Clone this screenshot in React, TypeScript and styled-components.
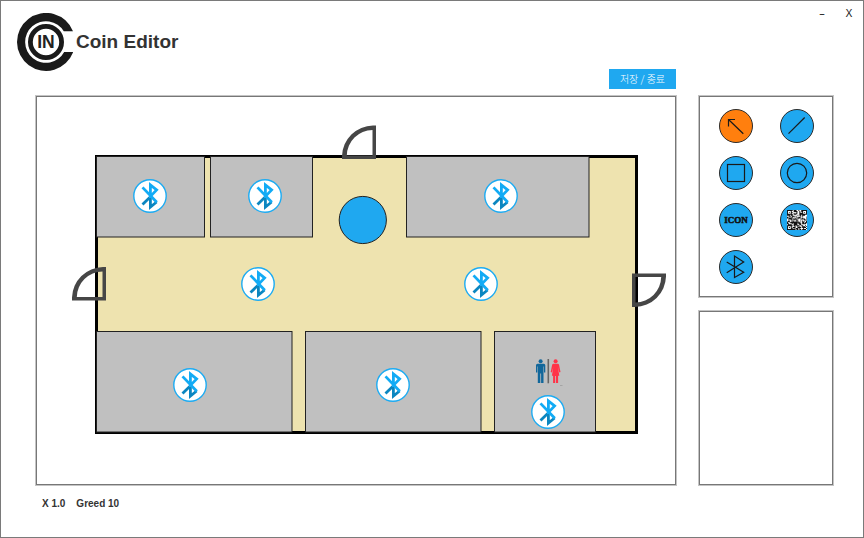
import React, { useState } from "react";
import styled, { createGlobalStyle } from "styled-components";

const BLUE = "#1fa8f0";
const DOOR = "#464646";

const GlobalStyle = createGlobalStyle`
  *, *::before, *::after { box-sizing: border-box; }
  body { margin: 0; background: #fff; }
  button { font: inherit; padding: 0; cursor: pointer; }
`;

const Shell = styled.div`
  display: flex;
  flex-direction: column;
  min-height: 100vh;
  border: 1px solid #7a7a7a;
  background: #fff;
  color: #333;
  font-family: "Liberation Sans", "Noto Sans CJK KR", sans-serif;
`;

const Header = styled.header`
  display: flex;
  padding-left: 16px;
  height: 88px;
`;

const Brand = styled.div`
  display: flex;
  align-items: center;
  align-self: flex-start;
  gap: 3px;
  margin-top: 12px;
`;

const Title = styled.h1`
  margin: 0;
  font-size: 19px;
  line-height: 24px;
  font-weight: 700;
`;

const SaveButton = styled.button`
  align-self: flex-end;
  margin-left: auto;
  width: 67px;
  height: 20px;
  border: 0;
  background: ${BLUE};
  color: #fff;
  && {
    font-family: "Noto Sans CJK KR", sans-serif;
    font-size: 10px;
    font-weight: 300;
    line-height: 20px;
  }
`;

const WindowControls = styled.div`
  display: flex;
  justify-content: flex-end;
  gap: 7px;
  width: 187px;
  padding: 2px 4px 0 0;
`;

const WindowButton = styled.button`
  width: 20px;
  height: 20px;
  border: 0;
  background: transparent;
  color: #222;
  && {
    font-family: "Noto Sans", sans-serif;
    font-size: 11px;
    line-height: 20px;
  }
`;

const Workspace = styled.main`
  display: grid;
  grid-template-columns: minmax(0, 1fr) 134px;
  gap: 23px;
  padding: 7px 30px 0 35px;
`;

const Panel = styled.section`
  border: 1px solid #777;
  box-shadow: 0 0 0 1px #c4c4c4;
  background: #fff;
`;

const Sidebar = styled.aside`
  display: flex;
  flex-direction: column;
  gap: 14px;
`;

const Properties = styled(Panel)`
  flex: 1;
`;

const Palette = styled(Panel)`
  display: grid;
  grid-template-columns: 34px 34px;
  grid-auto-rows: 34px;
  gap: 13px 27px;
  padding: 12px 19px 12px 19px;
`;

const ToolButton = styled.button<{ $active: boolean }>`
  display: flex;
  width: 34px;
  height: 34px;
  border: 1px solid #2b2b2b;
  border-radius: 50%;
  background: ${(p) => (p.$active ? "#ff7f0e" : BLUE)};
`;

const ToolDrawing = styled.svg`
  display: block;
  width: 32px;
  height: 32px;
  fill: none;
  stroke: #1a1a1a;
  stroke-width: 1.2;
`;

const Plan = styled.svg`
  display: block;
  width: 100%;
  height: auto;
`;

const Status = styled.footer`
  display: flex;
  gap: 11px;
  padding: 13px 41px;
  font-size: 10px;
  line-height: 12px;
  font-weight: 700;
`;

const Logo = () => (
  <svg width="56" height="58" viewBox="-29 -29 56 58" aria-hidden="true">
    <path
      d="M27 -10.7A29 29 0 1 0 27.2 10H18.2A20.8 20.8 0 1 1 17.8 -10.7Z"
      fill="#1a1a1a"
    />
    <circle r="15.6" fill="none" stroke="#1a1a1a" strokeWidth="4.8" />
    <text
      y="6.4"
      textAnchor="middle"
      fontFamily="Liberation Sans, sans-serif"
      fontSize="17.5"
      fontWeight="700"
      fill="#222"
    >
      IN
    </text>
  </svg>
);

const QR_SIZE = 21;

const inFinder = (x: number, y: number, fx: number, fy: number) =>
  x >= fx && x < fx + 5 && y >= fy && y < fy + 5;

const qrModule = (x: number, y: number) => {
  for (const [fx, fy] of [[0, 0], [16, 0], [0, 16]]) {
    if (inFinder(x, y, fx, fy)) {
      const d = Math.max(Math.abs(x - fx - 2), Math.abs(y - fy - 2));
      return d !== 1;
    }
  }
  const hash = Math.sin(x * 12.9898 + y * 78.233) * 43758.5453;
  return hash - Math.floor(hash) < 0.54;
};

const qrPath = Array.from({ length: QR_SIZE * QR_SIZE }, (_, i) => {
  const x = i % QR_SIZE;
  const y = Math.floor(i / QR_SIZE);
  return qrModule(x, y) ? `M${x} ${y}h1v1h-1z` : "";
}).join("");

const tools = [
  { name: "Select", art: <path d="M24.3 24.7L9.5 10.5M16 10.5H9.5V17.5" /> },
  { name: "Line", art: <path d="M8.5 24.7L24.7 8.5" /> },
  { name: "Rectangle", art: <rect x="8.5" y="8.5" width="17" height="17" /> },
  { name: "Circle", art: <circle cx="17" cy="17" r="9.7" /> },
  {
    name: "Icon",
    art: (
      <text
        x="17"
        y="20"
        textAnchor="middle"
        fontFamily="Liberation Serif, serif"
        fontSize="9"
        fontWeight="700"
        fill="#111"
        stroke="#111"
        strokeWidth="0.5"
      >
        ICON
      </text>
    ),
  },
  {
    name: "QR code",
    art: (
      <g transform="translate(7 7) scale(0.95)" stroke="none">
        <rect width="21" height="21" fill="#fff" />
        <path d={qrPath} fill="#111" />
      </g>
    ),
  },
  {
    name: "Beacon",
    art: <path d="M7.7 12L24.7 22.3L15.5 27.5V6L24.7 12L7.7 22.7" />,
  },
];

const rooms = [
  { x: 96.5, y: 156.5, w: 108, h: 80.5 },
  { x: 210.5, y: 156.5, w: 102, h: 80.5 },
  { x: 406.5, y: 156.5, w: 182.5, h: 80.5 },
  { x: 96.5, y: 331.5, w: 195.5, h: 100.5 },
  { x: 305.5, y: 331.5, w: 175.5, h: 100.5 },
  { x: 494.5, y: 331.5, w: 101, h: 100.5 },
];

const beacons = [
  [150, 196],
  [265, 196],
  [501, 196],
  [258, 284],
  [481, 284],
  [190, 385],
  [393, 385],
  [548, 412],
];

const doors = [
  { x: 376, y: 159, turn: 0 },
  { x: 106, y: 300.5, turn: 0 },
  { x: 632, y: 273.5, turn: 180 },
];

const Beacon = ({ x, y }: { x: number; y: number }) => (
  <g transform={`translate(${x} ${y})`} fill="none" strokeWidth="2.8">
    <circle r="16.2" fill="#fff" stroke="#1cabf2" strokeWidth="1.4" />
    <path d="M-7.5 8.6L0.4 0.8V11L6.6 6" stroke="#0b86c0" />
    <path d="M-7.5 -8.6L6.8 6.2M0.4 2V-11L6.6 -6L0.2 0.6" stroke="#12abf5" />
  </g>
);

const Door = ({ x, y, turn }: { x: number; y: number; turn: number }) => (
  <path
    transform={`translate(${x} ${y}) rotate(${turn})`}
    d="M-34 0V-3A31.5 31.5 0 0 1 -3 -33.5H0V0ZM-29.2 -3.5H-3.5V-29A26 26 0 0 0 -29.2 -3.5Z"
    fill={DOOR}
    fillRule="evenodd"
  />
);

const Restroom = () => (
  <g>
    <g fill="#11679b">
      <circle cx="540.6" cy="361.2" r="2" />
      <path d="M537.5 363.8H543.8Q545.3 363.8 545.3 365.3V372.5H544V366.5H543.5V383H541.1V373.5H540.3V383H537.8V366.5H537.3V372.5H536V365.3Q536 363.8 537.5 363.8Z" />
    </g>
    <path d="M548.3 359V383.3" stroke="#666" strokeWidth="1.6" />
    <g fill="#ff3348">
      <circle cx="555.6" cy="361.2" r="2" />
      <path d="M553.6 363.8H557.6Q558.8 363.8 559.1 365L560.5 372L559.3 372.4L557.9 367L559.3 375.8H558.1V383H556V376H555.2V383H553.1V375.8H551.9L553.3 367L551.9 372.4L550.7 372L552.1 365Q552.4 363.8 553.6 363.8Z" />
    </g>
    <path d="M560 385.5H562.5" stroke="#999" strokeWidth="0.7" />
  </g>
);

const FloorPlan = () => (
  <Plan viewBox="37 97 638 387" role="img" aria-label="Floor plan">
    <rect
      x="96.5"
      y="156.5"
      width="540"
      height="276"
      fill="#eee3af"
      stroke="#000"
      strokeWidth="3"
    />
    {rooms.map((r, i) => (
      <rect
        key={i}
        x={r.x}
        y={r.y}
        width={r.w}
        height={r.h}
        fill="#c0c0c0"
        stroke="#222"
        strokeWidth="1"
      />
    ))}
    <circle cx="362.8" cy="220" r="23.6" fill={BLUE} stroke="#222" />
    {doors.map((d, i) => (
      <Door key={i} {...d} />
    ))}
    <Restroom />
    {beacons.map(([x, y]) => (
      <Beacon key={`${x}-${y}`} x={x} y={y} />
    ))}
  </Plan>
);

export default function App() {
  const [active, setActive] = useState("Select");

  return (
    <Shell>
      <GlobalStyle />
      <Header>
        <Brand>
          <Logo />
          <Title>Coin Editor</Title>
        </Brand>
        <SaveButton type="button">저장 / 종료</SaveButton>
        <WindowControls>
          <WindowButton type="button" aria-label="Minimize">–</WindowButton>
          <WindowButton type="button" aria-label="Close">X</WindowButton>
        </WindowControls>
      </Header>
      <Workspace>
        <Panel>
          <FloorPlan />
        </Panel>
        <Sidebar>
          <Palette>
            {tools.map((tool) => (
              <ToolButton
                key={tool.name}
                type="button"
                aria-label={tool.name}
                aria-pressed={active === tool.name}
                $active={active === tool.name}
                onClick={() => setActive(tool.name)}
              >
                <ToolDrawing viewBox="1 1 32 32">{tool.art}</ToolDrawing>
              </ToolButton>
            ))}
          </Palette>
          <Properties aria-label="Properties" />
        </Sidebar>
      </Workspace>
      <Status>
        <span>X 1.0</span>
        <span>Greed 10</span>
      </Status>
    </Shell>
  );
}
